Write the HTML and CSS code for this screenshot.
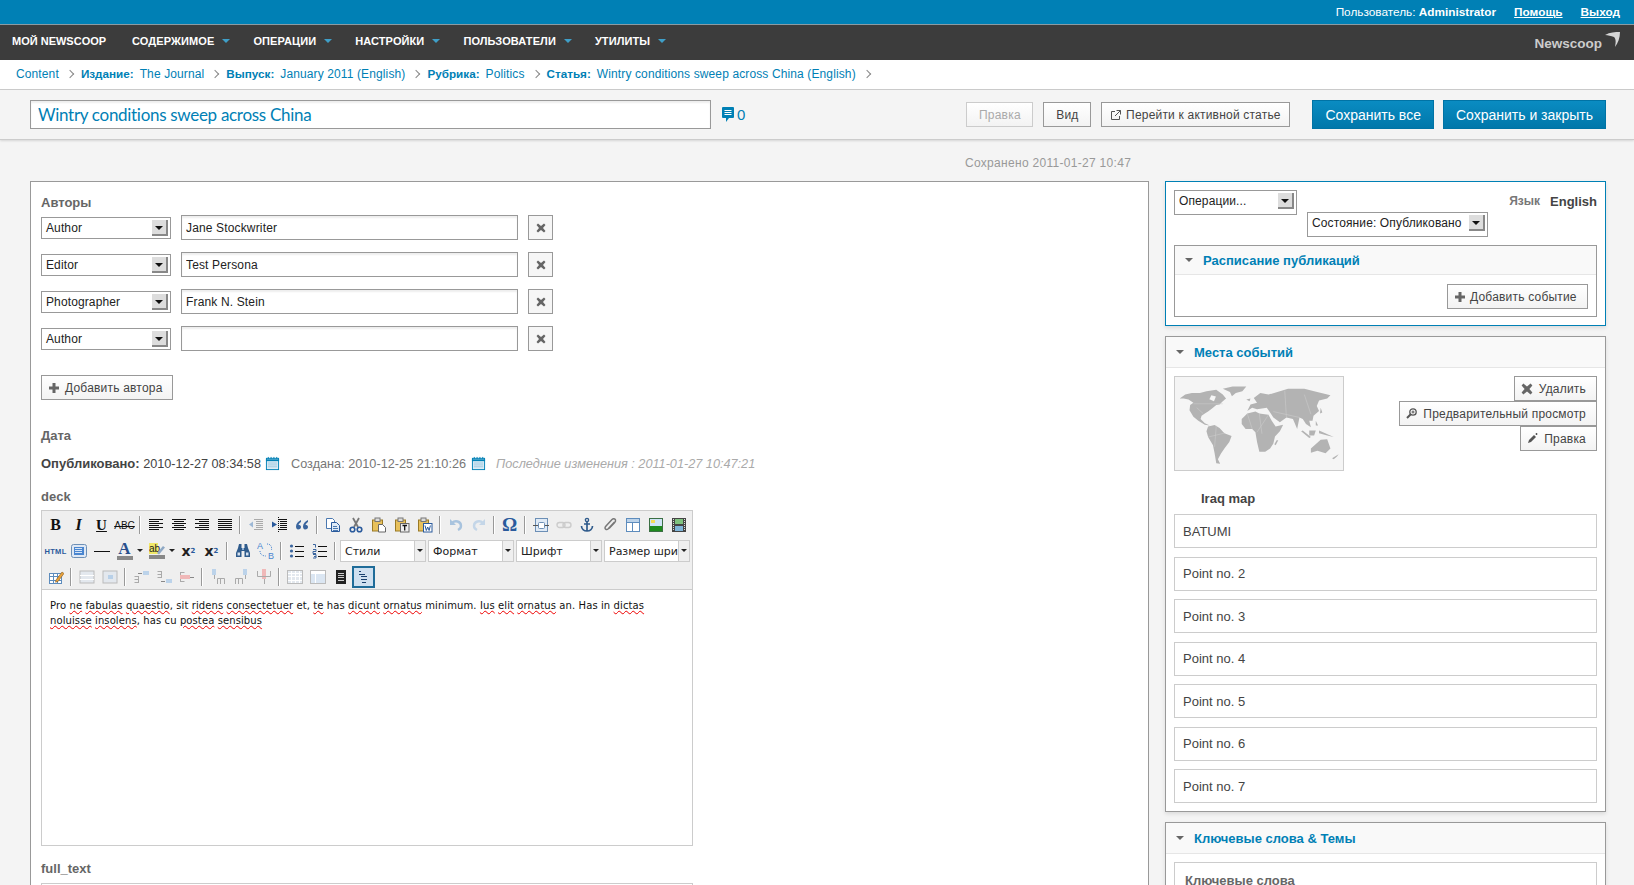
FILE: index.html
```html
<!DOCTYPE html>
<html lang="ru">
<head>
  <meta charset="UTF-8" />
  <title>Newscoop - Wintry conditions sweep across China</title>
  <link rel="stylesheet" href="styles.css">
</head>
<body>

  <!-- toolbar and ui icons, reused below -->
  <svg class="sprites" width="0" height="0">
    <symbol id="al" viewBox="0 0 16 16"><path d="M1 2.500h14M1 4.500h10M1 6.500h14M1 8.500h10M1 10.500h14M1 12.500h10" stroke="#111" fill="none"/></symbol>
    <symbol id="ac" viewBox="0 0 16 16"><path d="M1 2.500h14M3 4.500h10M1 6.500h14M3 8.500h10M1 10.500h14M3 12.500h10" stroke="#111" fill="none"/></symbol>
    <symbol id="ar" viewBox="0 0 16 16"><path d="M1 2.500h14M5 4.500h10M1 6.500h14M5 8.500h10M1 10.500h14M5 12.500h10" stroke="#111" fill="none"/></symbol>
    <symbol id="aj" viewBox="0 0 16 16"><path d="M1 2.500h14M1 4.500h14M1 6.500h14M1 8.500h14M1 10.500h14M1 12.500h14" stroke="#111" fill="none"/></symbol>
    <symbol id="outdent" viewBox="0 0 16 16"><path d="M6 2.500h9M8 4.500h7M8 6.500h7M8 8.500h7M8 10.500h7M6 12.500h9" stroke="#aaa" fill="none"/><path d="M1 7.500l4-3v6z" fill="#9db8d6"/></symbol>
    <symbol id="indent" viewBox="0 0 16 16"><path d="M7 2.500h9M9 4.500h7M9 6.500h7M9 8.500h7M9 10.500h7M7 12.500h9" stroke="#111" fill="none"/><path d="M6 7.500l-5-3v6z" fill="#2a5a9c"/><path d="M7.500 0v16" stroke="#111" stroke-dasharray="1 1"/></symbol>
    <symbol id="quote" viewBox="0 0 16 16"><path d="M7 3C4 4.500 2 6.500 2 9.500c0 2 1 3 2 3 2 0 3-1 3-2.500S6 8 4.500 8C5 6.500 6 5.500 7 5zM14 3c-3 1.500-5 3.500-5 6.500 0 2 1 3 2 3 2 0 3-1 3-2.500S13 8 11.500 8c.5-1.500 1.500-2.500 2.500-3z" fill="#3a659e"/></symbol>
    <symbol id="copy" viewBox="0 0 16 16"><path d="M1.500 1.500h6l2 2v8h-8z" fill="#fff" stroke="#4a78b0"/><path d="M6.500 5.500h5l3 3v6h-8z" fill="#dfeaf6" stroke="#2a5a9c"/><path d="M8 9.500h4M8 11.500h5M8 13.500h5" stroke="#4a78b0"/></symbol>
    <symbol id="cut" viewBox="0 0 16 16"><path d="M5 1l5 9M11 1L6 10" stroke="#777" stroke-width="1.800" fill="none"/><circle cx="4.500" cy="12.500" r="2.300" fill="none" stroke="#2a5a9c" stroke-width="1.600"/><circle cx="11.500" cy="12.500" r="2.300" fill="none" stroke="#2a5a9c" stroke-width="1.600"/></symbol>
    <symbol id="paste" viewBox="0 0 16 16"><rect x="1.500" y="3" width="10" height="11" fill="#e8c15c" stroke="#9a7a26"/><rect x="4" y="1" width="5" height="3.500" fill="#ddd" stroke="#777"/><path d="M7.500 7.500h4l3 3v4.500h-7z" fill="#fff" stroke="#666"/></symbol>
    <symbol id="pastet" viewBox="0 0 16 16"><rect x="1.500" y="3" width="10" height="11" fill="#e8c15c" stroke="#9a7a26"/><rect x="4" y="1" width="5" height="3.500" fill="#ddd" stroke="#777"/><rect x="6.500" y="6.500" width="8.500" height="8.500" fill="#eee" stroke="#666"/><path d="M8.500 8.500h4.500M10.700 8.500v5" stroke="#111" stroke-width="1.300"/></symbol>
    <symbol id="pastew" viewBox="0 0 16 16"><rect x="1.500" y="3" width="10" height="11" fill="#e8c15c" stroke="#9a7a26"/><rect x="4" y="1" width="5" height="3.500" fill="#ddd" stroke="#777"/><rect x="6.500" y="6.500" width="8.500" height="8.500" fill="#fff" stroke="#2a5a9c"/><path d="M8 8.500l1.300 5 1.400-3.500 1.400 3.500 1.300-5" stroke="#2a5a9c" fill="none"/></symbol>
    <symbol id="undo" viewBox="0 0 16 16"><path d="M4 6c3-3 9-2 9 3 0 2-1 3-3 4" fill="none" stroke="#a8c3de" stroke-width="2.400"/><path d="M2 2v6h6z" fill="#a8c3de"/></symbol>
    <symbol id="redo" viewBox="0 0 16 16"><path d="M12 6C9 3 3 4 3 9c0 2 1 3 3 4" fill="none" stroke="#c4d6e8" stroke-width="2.400"/><path d="M14 2v6H8z" fill="#c4d6e8"/></symbol>
    <symbol id="media" viewBox="0 0 16 16"><rect x="2.500" y="1.500" width="12" height="13" fill="#dfeaf6" stroke="#6c8fb6"/><path d="M0 8.500h16" stroke="#555"/><rect x="5.500" y="5.500" width="6" height="6" rx="1" fill="#fff" stroke="#6c8fb6"/></symbol>
    <symbol id="link" viewBox="0 0 16 16"><rect x="1" y="5.500" width="8" height="5" rx="2.500" fill="none" stroke="#ccc" stroke-width="1.400"/><rect x="7" y="5.500" width="8" height="5" rx="2.500" fill="none" stroke="#ccc" stroke-width="1.400"/></symbol>
    <symbol id="anchor" viewBox="0 0 16 16"><circle cx="8" cy="3" r="1.600" fill="none" stroke="#2f5b8c" stroke-width="1.400"/><path d="M8 4.500V14M5 7h6M2.500 9c0 3 2.500 5 5.500 5s5.500-2 5.500-5" fill="none" stroke="#2f5b8c" stroke-width="1.700"/></symbol>
    <symbol id="attach" viewBox="0 0 16 16"><path d="M12.500 5L6 12c-1 1-3 .5-3-1 0-.7.3-1.200 1-2l6-6.500c1-1 3-1 3.500.5.3 1-.3 2-1 2.700L7 11.500" fill="none" stroke="#777" stroke-width="1.500"/></symbol>
    <symbol id="template" viewBox="0 0 16 16"><rect x="1.500" y="1.500" width="13" height="13" fill="#fff" stroke="#5d8cbd"/><rect x="2" y="2" width="12" height="3" fill="#bcd3ea"/><path d="M2 5.500h12M7.500 5v9" stroke="#5d8cbd"/></symbol>
    <symbol id="image" viewBox="0 0 16 16"><rect x="1.500" y="1.500" width="13" height="13" fill="#cfe4f6" stroke="#3b6f44"/><rect x="2" y="9" width="12" height="5" fill="#1e8a1e"/><rect x="3" y="3" width="4" height="3" fill="#f3dc5a"/></symbol>
    <symbol id="video" viewBox="0 0 16 16"><rect x="1" y="1" width="14" height="14" fill="#444"/><path d="M2.500 2v12M13.500 2v12" stroke="#ddd" stroke-dasharray="1 1" fill="none"/><rect x="4" y="2" width="8" height="5" fill="#7ec27e"/><rect x="4" y="9" width="8" height="5" fill="#7fb5d9"/></symbol>
    <symbol id="source" viewBox="0 0 16 16"><rect x=".5" y="1.500" width="15" height="13" rx="2" fill="#dfe8f4" stroke="#6c8fb6"/><rect x="3" y="4" width="10" height="8" fill="#4a86d0"/><path d="M4 5.500h7M4 7.500h7M4 9.500h7" stroke="#d5e4f6"/></symbol>
    <symbol id="find" viewBox="0 0 16 16"><path d="M4 1h2.500v4h3V1H12l1 4 2 5v4H9.500V8h-3v6H1v-4l2-5z" fill="#2f5b8c"/><rect x="2.500" y="9.500" width="2.500" height="3" fill="#d5e2f0"/><rect x="11" y="9.500" width="2.500" height="3" fill="#d5e2f0"/><rect x="7" y="5" width="2" height="2" fill="#8fb0d4"/></symbol>
    <symbol id="ul" viewBox="0 0 16 16"><circle cx="2.500" cy="3" r="1.600" fill="#3a659e"/><circle cx="2.500" cy="8" r="1.600" fill="#3a659e"/><circle cx="2.500" cy="13" r="1.600" fill="#3a659e"/><path d="M6 3.500h9M6 8.500h9M6 13.500h9" stroke="#111"/></symbol>
    <symbol id="ol" viewBox="0 0 16 16"><path d="M1 1.500h2.500v3M1 6.500h3v2H1v2h3M1 11.500h3v3.500H1M2 13.500h2" stroke="#3a659e" fill="none"/><path d="M6 3.500h9M6 8.500h9M6 13.500h9" stroke="#111"/></symbol>
    <symbol id="tedit" viewBox="0 0 16 16"><rect x="1.500" y="4.500" width="12" height="10" fill="#fff" stroke="#5d8cbd"/><path d="M1 7.500h12M1 11.500h12M5.500 4v11M9.500 4v11" stroke="#5d8cbd"/><path d="M8 11l6-8 2 1.500-6 8-2.500.7z" fill="#e8a23c" stroke="#8a5a1c" stroke-width=".6"/></symbol>
    <symbol id="trow" viewBox="0 0 16 16"><rect x="1" y="2" width="14" height="12" fill="#e3e8ee" stroke="#bbb"/><path d="M1 6.500h14M1 10.500h14" stroke="#fff"/></symbol>
    <symbol id="tcell" viewBox="0 0 16 16"><rect x="1" y="2" width="14" height="12" fill="#e3e8ee" stroke="#bbb"/><rect x="6" y="6" width="5" height="4" fill="#b8d0e8"/></symbol>
    <symbol id="rowb" viewBox="0 0 16 16"><path d="M1.500 7.500h4M1.500 10.500h4M1.500 13.500h4M5.500 7v7" stroke="#aaa" fill="none"/><rect x="10" y="2" width="6" height="4" fill="#bcd3ea"/><path d="M5 4.500h4" stroke="#888"/></symbol>
    <symbol id="rowa" viewBox="0 0 16 16"><path d="M1.500 2.500h4M1.500 5.500h4M1.500 8.500h4M5.500 2v7" stroke="#aaa" fill="none"/><rect x="10" y="10" width="6" height="4" fill="#bcd3ea"/><path d="M5 12.500h4" stroke="#888"/></symbol>
    <symbol id="rowd" viewBox="0 0 16 16"><path d="M1.500 3.500h4M1.500 12.500h4M1.500 3v10" stroke="#aaa" fill="none"/><rect x="1" y="6" width="10" height="4" fill="#f0b8b8"/><path d="M11 8.500h4" stroke="#888"/></symbol>
    <symbol id="colb" viewBox="0 0 16 16"><rect x="2" y="0" width="4" height="6" fill="#bcd3ea"/><path d="M4.500 6v4M7.500 15V9.500h7V15M10.500 9v6" stroke="#aaa" fill="none"/></symbol>
    <symbol id="cola" viewBox="0 0 16 16"><rect x="10" y="0" width="4" height="6" fill="#bcd3ea"/><path d="M12.500 6v4M2.500 15V9.500h7V15M5.500 9v6" stroke="#aaa" fill="none"/></symbol>
    <symbol id="cold" viewBox="0 0 16 16"><rect x="6" y="0" width="4" height="10" fill="#f0b8b8"/><path d="M1.500 2v5.500h13V2M8.500 10v5" stroke="#aaa" fill="none"/></symbol>
    <symbol id="tgrid" viewBox="0 0 16 16"><rect x=".5" y="1.500" width="15" height="13" fill="#e3e8ee" stroke="#bbb"/><path d="M1 4.500h14M1 7.500h14M1 11.500h14M4.500 2v12M8.500 2v12M12.500 2v12" stroke="#fff"/></symbol>
    <symbol id="tprop" viewBox="0 0 16 16"><rect x=".5" y="1.500" width="15" height="13" fill="#dbe6f2" stroke="#bbb"/><rect x="1" y="2" width="14" height="3" fill="#fff"/><path d="M5.500 5v9" stroke="#fff"/></symbol>
    <symbol id="print" viewBox="0 0 16 16"><rect x="3" y="1" width="10" height="14" fill="#222"/><path d="M5 4.500h6M5 6.500h6M5 8.500h6M5 11.500h6" stroke="#ccc"/></symbol>
    <symbol id="code" viewBox="0 0 16 16"><path d="M3 2.500h2M3 5.500h6M5 7.500h6M5 10.500h6M6 13.500h4" stroke="#18406e" stroke-width="1.200" fill="none"/></symbol>
    <symbol id="plus" viewBox="0 0 10 10"><path d="M3.500 0h3v3.500H10v3H6.500V10h-3V6.500H0v-3h3.500z" fill="#666"/></symbol>
    <symbol id="cross" viewBox="0 0 10 10"><path d="M2 .5l3 2.500 3-2.500 1.500 1.500L7 5l2.500 3L8 9.500 5 7 2 9.500.5 8 3 5 .5 2z" fill="#666"/></symbol>
    <symbol id="cal" viewBox="0 0 16 16"><rect x="1.500" y="2.500" width="13" height="12" fill="#dcecf6" stroke="#0080b5"/><path d="M1 4.500h14" stroke="#0080b5" stroke-width="2"/><path d="M3.500 1v2M6.500 1v2M9.500 1v2M12.500 1v2" stroke="#0080b5"/><path d="M3 7.500h10M3 9.500h10M3 11.500h10" stroke="#9cc8e0"/></symbol>
  </svg>

  <div class="topbar">
    <span class="user">Пользователь: <b>Administrator</b></span>
    <a href="#">Помощь</a>
    <a href="#">Выход</a>
  </div>

  <nav class="mainnav">
    <a href="#" class="nav-first">Мой Newscoop</a>
    <a href="#">Содержимое<i class="caret"></i></a>
    <a href="#">Операции<i class="caret"></i></a>
    <a href="#">Настройки<i class="caret"></i></a>
    <a href="#">Пользователи<i class="caret"></i></a>
    <a href="#">Утилиты<i class="caret"></i></a>
    <div class="logo">Newscoop<svg width="15" height="15" viewBox="0 0 15 15"><path d="M0 3C5 0 10 0 15 0c0 6-2 11-5 15 1-5 1-8-1-10C6 4 3 3 0 3z" fill="#d5d5d5"/></svg></div>
  </nav>

  <div class="crumbs">
    <a href="#">Content</a><i class="chev"></i>
    <b>Издание:</b><a href="#">The Journal</a><i class="chev"></i>
    <b>Выпуск:</b><a href="#">January 2011 (English)</a><i class="chev"></i>
    <b>Рубрика:</b><a href="#">Politics</a><i class="chev"></i>
    <b>Статья:</b><a href="#">Wintry conditions sweep across China (English)</a><i class="chev"></i>
  </div>

  <div class="titlebar">
    <input class="title-input" type="text" value="Wintry conditions sweep across China" />
    <span class="comments">
      <svg width="12" height="15" viewBox="0 0 12 15"><path d="M1 0h10a1 1 0 0 1 1 1v9a1 1 0 0 1-1 1H7l-3 4v-4H1a1 1 0 0 1-1-1V1a1 1 0 0 1 1-1z" fill="#0080b5"/><path d="M2.500 3.500h7M2.500 5.500h7M2.500 7.500h7" stroke="#fff"/></svg>0
    </span>
    <div class="title-actions">
      <button class="btn btn-disabled btn-edit">Правка</button>
      <button class="btn btn-view">Вид</button>
      <button class="btn btn-goto">
        <svg width="10" height="10" viewBox="0 0 10 10"><path d="M4 1.500H.5v8h8V6M5.500.5h4v4M9.500.5L4 6" fill="none" stroke="#555"/></svg>
        Перейти к активной статье
      </button>
      <button class="btn-save">Сохранить все</button>
      <button class="btn-save">Сохранить и закрыть</button>
    </div>
  </div>

  <div class="saved">Сохранено 2011-01-27 10:47</div>

  <div class="content">
    <main class="panel">
      <h3 class="label">Авторы</h3>
      <div class="author-row">
        <div class="sel sel-author">Author<span class="sel-arrow"></span></div>
        <input class="text-input" type="text" value="Jane Stockwriter" />
        <button class="btn-x"><svg width="10" height="10"><use href="#cross"/></svg></button>
      </div>
      <div class="author-row">
        <div class="sel sel-author">Editor<span class="sel-arrow"></span></div>
        <input class="text-input" type="text" value="Test Persona" />
        <button class="btn-x"><svg width="10" height="10"><use href="#cross"/></svg></button>
      </div>
      <div class="author-row">
        <div class="sel sel-author">Photographer<span class="sel-arrow"></span></div>
        <input class="text-input" type="text" value="Frank N. Stein" />
        <button class="btn-x"><svg width="10" height="10"><use href="#cross"/></svg></button>
      </div>
      <div class="author-row">
        <div class="sel sel-author">Author<span class="sel-arrow"></span></div>
        <input class="text-input" type="text" value="" />
        <button class="btn-x"><svg width="10" height="10"><use href="#cross"/></svg></button>
      </div>
      <button class="btn btn-add-author"><svg width="10" height="10"><use href="#plus"/></svg>Добавить автора</button>

      <h3 class="label label-date">Дата</h3>
      <div class="dates">
        <b>Опубликовано:</b> 2010-12-27 08:34:58 <svg class="cal" width="15" height="15"><use href="#cal"/></svg>
        <span class="created">Создана: 2010-12-25 21:10:26</span> <svg class="cal" width="15" height="15"><use href="#cal"/></svg>
        <em>Последние изменения : 2011-01-27 10:47:21</em>
      </div>

      <h3 class="label label-deck">deck</h3>
      <div class="editor">
        <div class="toolbar">
          <div class="tb-row">
            <span class="tb tb-b">B</span><span class="tb tb-i">I</span><span class="tb tb-u">U</span><span class="tb tb-s">ABC</span><i class="tb-sep"></i>
            <span class="tb"><svg width="16" height="16"><use href="#al"/></svg></span><span class="tb"><svg width="16" height="16"><use href="#ac"/></svg></span><span class="tb"><svg width="16" height="16"><use href="#ar"/></svg></span><span class="tb"><svg width="16" height="16"><use href="#aj"/></svg></span><i class="tb-sep"></i>
            <span class="tb"><svg width="16" height="16"><use href="#outdent"/></svg></span><span class="tb"><svg width="16" height="16"><use href="#indent"/></svg></span><span class="tb"><svg width="16" height="16"><use href="#quote"/></svg></span><i class="tb-sep"></i>
            <span class="tb"><svg width="16" height="16"><use href="#copy"/></svg></span><span class="tb"><svg width="16" height="16"><use href="#cut"/></svg></span><span class="tb"><svg width="16" height="16"><use href="#paste"/></svg></span><span class="tb"><svg width="16" height="16"><use href="#pastet"/></svg></span><span class="tb"><svg width="16" height="16"><use href="#pastew"/></svg></span><i class="tb-sep"></i>
            <span class="tb"><svg width="16" height="16"><use href="#undo"/></svg></span><span class="tb"><svg width="16" height="16"><use href="#redo"/></svg></span><i class="tb-sep"></i>
            <span class="tb tb-omega">Ω</span><i class="tb-sep"></i>
            <span class="tb"><svg width="16" height="16"><use href="#media"/></svg></span><span class="tb"><svg width="16" height="16"><use href="#link"/></svg></span><span class="tb"><svg width="16" height="16"><use href="#anchor"/></svg></span><span class="tb"><svg width="16" height="16"><use href="#attach"/></svg></span><span class="tb"><svg width="16" height="16"><use href="#template"/></svg></span><span class="tb"><svg width="16" height="16"><use href="#image"/></svg></span><span class="tb"><svg width="16" height="16"><use href="#video"/></svg></span>
          </div>
          <div class="tb-row">
            <span class="tb tb-html">HTML</span><span class="tb"><svg width="16" height="16"><use href="#source"/></svg></span><span class="tb tb-hr"><i></i></span>
            <span class="tb tb-color">A<i></i></span><i class="tb-drop"></i>
            <span class="tb tb-hl">
              <svg width="16" height="16" viewBox="0 0 16 16"><rect x="0" y="0" width="9" height="11" fill="#f0e868"/><text x="0" y="9" class="hl-text">ab</text><path d="M8 10l6-7 2 1.500-6 7z" fill="#8fa8c4"/><rect x="0" y="12" width="16" height="4" fill="#888"/></svg>
            </span><i class="tb-drop"></i>
            <span class="tb tb-sub">x<sub>2</sub></span><span class="tb tb-sub">x<sup>2</sup></span><i class="tb-sep"></i>
            <span class="tb"><svg width="16" height="16"><use href="#find"/></svg></span>
            <span class="tb">
              <svg width="18" height="18" viewBox="0 0 18 18"><text x="0" y="7" class="repl-text">A</text><text x="11" y="17" class="repl-text">B</text><path d="M3 9c0 3 2 5 6 5M10 2c4 0 5 3 4.500 6" fill="none" stroke="#4a86d0" stroke-dasharray="1 1"/></svg>
            </span><i class="tb-sep"></i>
            <span class="tb"><svg width="16" height="16"><use href="#ul"/></svg></span><span class="tb"><svg width="16" height="16"><use href="#ol"/></svg></span><i class="tb-sep"></i>
            <div class="tb-selects">
              <div class="tb-sel">Стили<span></span></div>
              <div class="tb-sel">Формат<span></span></div>
              <div class="tb-sel">Шрифт<span></span></div>
              <div class="tb-sel">Размер шри<span></span></div>
            </div>
          </div>
          <div class="tb-row">
            <span class="tb"><svg width="16" height="16"><use href="#tedit"/></svg></span><i class="tb-sep"></i>
            <span class="tb"><svg width="16" height="16"><use href="#trow"/></svg></span><span class="tb"><svg width="16" height="16"><use href="#tcell"/></svg></span><i class="tb-sep"></i>
            <span class="tb"><svg width="16" height="16"><use href="#rowb"/></svg></span><span class="tb"><svg width="16" height="16"><use href="#rowa"/></svg></span><span class="tb"><svg width="16" height="16"><use href="#rowd"/></svg></span><i class="tb-sep"></i>
            <span class="tb"><svg width="16" height="16"><use href="#colb"/></svg></span><span class="tb"><svg width="16" height="16"><use href="#cola"/></svg></span><span class="tb"><svg width="16" height="16"><use href="#cold"/></svg></span><i class="tb-sep"></i>
            <span class="tb"><svg width="16" height="16"><use href="#tgrid"/></svg></span><span class="tb"><svg width="16" height="16"><use href="#tprop"/></svg></span><span class="tb"><svg width="16" height="16"><use href="#print"/></svg></span><span class="tb tb-active"><svg width="16" height="16"><use href="#code"/></svg></span>
          </div>
        </div>
        <div class="editor-body">
          Pro <u>ne</u> <u>fabulas</u> <u>quaestio</u>, sit <u>ridens</u> <u>consectetuer</u> et, <u>te</u> has <u>dicunt</u> <u>ornatus</u> minimum. <u>Ius</u> <u>elit</u> <u>ornatus</u> an. Has in <u>dictas</u><br>
          <u>noluisse</u> <u>insolens</u>, has cu <u>postea</u> <u>sensibus</u>
        </div>
      </div>

      <h3 class="label label-full">full_text</h3>
      <div class="editor editor-next"></div>
    </main>

    <aside class="side">
      <section class="box box-active">
        <div class="status-row">
          <div class="sel sel-ops">Операции...<span class="sel-arrow"></span></div>
          <div class="status-right">
            <div class="lang"><span>Язык</span><b>English</b></div>
            <div class="sel sel-state">Состояние: Опубликовано<span class="sel-arrow"></span></div>
          </div>
        </div>
        <div class="box-inner">
          <h4 class="box-head head-inner"><i class="tri"></i>Расписание публикаций</h4>
          <div class="schedule">
            <button class="btn btn-add-event"><svg width="10" height="10"><use href="#plus"/></svg>Добавить событие</button>
          </div>
        </div>
      </section>

      <section class="box">
        <h4 class="box-head"><i class="tri"></i>Места событий</h4>
        <div class="box-body">
          <div class="map-row">
            <svg class="map" width="170" height="95" viewBox="6 6 510 285">
              <g fill="#b3b3b3">
                <path d="M18 72L35 60 55 55 80 55 100 50 130 45 150 60 160 72 150 80 140 90 130 92 120 100 105 112 95 118 85 125 82 135 95 148 110 155 95 152 75 140 60 128 48 108 50 92 60 85 45 75 30 72z"/>
                <path d="M150 42L180 35 222 35 210 50 190 55 178 65 172 52z"/>
                <path d="M105 158L125 153 140 162 155 178 177 187 170 205 155 225 145 240 135 258 142 272 130 270 125 240 120 215 105 190 100 172z"/>
                <path d="M208 135L225 118 250 112 262 118 290 122 300 140 312 158 335 152 325 172 310 188 305 210 295 225 280 235 262 235 255 205 250 175 240 165 220 165 208 150z"/>
                <path d="M315 200L320 200 312 215 308 212z"/>
                <path d="M225 110L235 90 255 85 245 70 265 55 290 60 330 48 350 42 400 42 430 50 480 62 470 72 445 78 438 95 445 110 428 125 425 140 415 140 420 160 405 150 395 135 385 130 378 165 365 135 345 130 325 145 305 130 295 115 285 100 255 105 240 100z"/>
                <path d="M395 170L420 190 415 193 390 172zM415 170L435 170 430 185 415 185zM445 170L490 190 470 185 445 178zM450 100L455 115 448 118zM435 140L442 155 435 155z"/>
                <path d="M420 225L450 198 470 197 480 225 465 240 440 232 420 238z"/>
                <path d="M485 255L505 243 500 250 490 258zM222 75L235 72 232 80z"/>
              </g>
              <path d="M115 62l14 4-6 14-14-6z" fill="#f5f5f5"/>
              <path d="M60 88L150 88M90 118L70 100M225 118L240 165M262 118L270 180M290 122L255 175M305 112L385 130M340 48L345 130M400 60L420 120M130 155L125 220M155 178L105 190" stroke="#cfcfcf" stroke-width="1.500" fill="none"/>
            </svg>
            <div class="map-actions">
              <button class="btn"><svg width="12" height="12"><use href="#cross"/></svg>Удалить</button>
              <button class="btn"><svg width="11" height="11" viewBox="0 0 11 11"><circle cx="7" cy="4" r="3.200" fill="none" stroke="#555" stroke-width="1.300"/><path d="M4.500 6.500L1 10" stroke="#555" stroke-width="2"/><path d="M5.500 4h3M7 2.500v3" stroke="#555"/></svg>Предварительный просмотр</button>
              <button class="btn"><svg width="11" height="11" viewBox="0 0 11 11"><path d="M1 10l1-3 5-5 2 2-5 5z" fill="#555"/><path d="M9.500 0v2M8.500 1h2" stroke="#555"/></svg>Правка</button>
            </div>
          </div>
          <div class="map-name">Iraq map</div>
          <ul class="points">
            <li>BATUMI</li>
            <li>Point no. 2</li>
            <li>Point no. 3</li>
            <li>Point no. 4</li>
            <li>Point no. 5</li>
            <li>Point no. 6</li>
            <li>Point no. 7</li>
          </ul>
        </div>
      </section>

      <section class="box">
        <h4 class="box-head"><i class="tri"></i>Ключевые слова &amp; Темы</h4>
        <div class="box-body">
          <div class="keywords">Ключевые слова</div>
        </div>
      </section>
    </aside>
  </div>

</body>
</html>
```

FILE: styles.css
```css
:root {
  --blue: #0080b5;
  --border: #999;
  --text: #444;
}
* {
  margin: 0;
  padding: 0;
  box-sizing: border-box;
}
html, body {
  height: 885px;
  overflow: hidden;
}
body {
  font-family: 'Liberation Sans', Arial, sans-serif;
  font-size: 13px;
  background: #f4f4f4;
  color: var(--text);
}
a {
  color: inherit;
}
.sprites {
  position: absolute;
}

/* top */
.topbar {
  height: 25px;
  background: var(--blue);
  border-bottom: 1px solid #8a9ba3;
  color: #fff;
  display: flex;
  justify-content: flex-end;
  align-items: center;
  gap: 18px;
  padding-right: 14px;
  font-size: 11.8px;
}
.topbar a {
  font-weight: bold;
}
.mainnav {
  height: 35px;
  background: #3c3c3c;
  display: flex;
  align-items: center;
  padding: 0 0 4px 12px;
  color: #fff;
}
.mainnav > a {
  text-decoration: none;
  text-transform: uppercase;
  font-size: 11px;
  font-weight: bold;
  letter-spacing: .1px;
  margin-right: 23px;
  display: flex;
  align-items: center;
}
.mainnav > .nav-first {
  letter-spacing: 0;
  margin-right: 26px;
}
.caret {
  width: 0;
  height: 0;
  border: 4px solid transparent;
  border-top: 4px solid #3f9fc8;
  border-bottom: 0;
  margin-left: 8px;
}
.logo {
  margin-left: auto;
  margin-right: 14px;
  font-size: 13.5px;
  font-weight: bold;
  color: #ccc;
  display: flex;
  align-items: flex-start;
  margin-top: 6px;
}
.logo svg {
  margin-top: -4px;
  margin-left: 3px;
}
.crumbs {
  height: 30px;
  background: #fff;
  border-bottom: 1px solid #ccc;
  display: flex;
  align-items: center;
  padding: 0 0 2px 16px;
  font-size: 12px;
  color: var(--blue);
}
.crumbs a {
  text-decoration: none;
  letter-spacing: .12px;
}
.crumbs b {
  font-size: 11.7px;
  margin-right: 6px;
}
.chev {
  width: 6px;
  height: 6px;
  border-top: 1px solid #888;
  border-right: 1px solid #888;
  transform: rotate(45deg);
  margin: 0 8px;
}
.titlebar {
  height: 50px;
  display: flex;
  align-items: center;
  padding: 0 28px 0 30px;
  border-bottom: 1px solid #ccc;
  box-shadow: 0 1px 2px rgba(0,0,0,.12);
}
.title-input {
  width: 681px;
  height: 29px;
  border: 1px solid var(--border);
  box-shadow: inset 0 2px 2px #eee;
  padding-left: 7px;
  font-family: Lato, 'Noto Sans', sans-serif;
  font-size: 17px;
  letter-spacing: -.3px;
  color: var(--blue);
  outline: none;
}
.comments {
  display: flex;
  align-items: center;
  gap: 3px;
  margin-left: 11px;
  font-size: 15px;
  color: var(--blue);
}
.title-actions {
  margin-left: auto;
  display: flex;
  align-items: center;
}
.btn {
  height: 25px;
  font-family: inherit;
  font-size: 12px;
  letter-spacing: .2px;
  color: var(--text);
  background: linear-gradient(#fff, #f3f3f3);
  border: 1px solid var(--border);
  display: inline-flex;
  align-items: center;
  justify-content: center;
  white-space: nowrap;
}
.btn-edit { width: 67px; }
.btn-view { width: 48px; margin-left: 10px; }
.btn-goto { width: 189px; margin-left: 10px; gap: 5px; }
.btn-disabled {
  color: #aaa;
  border-color: #ccc;
}
.btn-save {
  height: 29px;
  padding: 0 12px;
  font-family: inherit;
  font-size: 14px;
  color: #fff;
  background: linear-gradient(#0a8cc2, #0077aa);
  border: 1px solid #0073a5;
  margin-left: 9px;
}
.btn-goto + .btn-save {
  margin-left: 22px;
}
.saved {
  height: 41px;
  display: flex;
  align-items: center;
  padding: 4px 0 0 965px;
  font-size: 12px;
  letter-spacing: .3px;
  color: #999;
}

/* layout */
.content {
  display: grid;
  grid-template-columns: 1119px 441px;
  gap: 16px;
  padding-left: 30px;
  align-items: start;
}
.panel {
  background: #fff;
  border: 1px solid var(--border);
  padding: 13px 10px 20px;
  height: 760px;
}
.label {
  font-size: 13px;
  line-height: 16px;
  color: #666;
}
.author-row {
  display: flex;
  align-items: center;
  height: 25px;
  margin-top: 12px;
}
.label + .author-row {
  margin-top: 4px;
}

/* fake selects */
.sel {
  height: 22px;
  background: #fff;
  border: 1px solid var(--border);
  font-size: 12px;
  letter-spacing: .12px;
  color: #222;
  padding-left: 4px;
  display: flex;
  align-items: center;
  justify-content: space-between;
}
.sel-arrow {
  width: 16px;
  height: 16px;
  margin-right: 2px;
  background: #ddd;
  border-right: 2px solid #888;
  border-bottom: 2px solid #888;
  position: relative;
}
.sel-arrow::after {
  content: "";
  position: absolute;
  left: 3px;
  top: 6px;
  border: 4px solid transparent;
  border-top: 4px solid #111;
  border-bottom: 0;
}
.sel-author {
  width: 130px;
  margin-right: 10px;
}
.text-input {
  width: 337px;
  height: 25px;
  border: 1px solid var(--border);
  box-shadow: inset 0 2px 2px #eee;
  padding-left: 4px;
  font-family: inherit;
  font-size: 12px;
  letter-spacing: .15px;
  color: #222;
  outline: none;
}
.btn-x {
  width: 25px;
  height: 25px;
  margin-left: 10px;
  background: #f6f6f6;
  border: 1px solid var(--border);
  display: flex;
  align-items: center;
  justify-content: center;
}
.btn-add-author {
  width: 132px;
  margin-top: 24px;
  gap: 6px;
  justify-content: flex-start;
  padding-left: 7px;
}
.label-date { margin-top: 28px; }
.dates {
  margin-top: 12px;
  line-height: 16px;
  font-size: 12.7px;
  color: #444;
  white-space: nowrap;
}
.dates b {
  font-size: 13px;
}
.cal {
  vertical-align: -3px;
  margin-left: 1px;
}
.created {
  color: #777;
  margin-left: 7px;
}
.dates em {
  color: #aaa;
  margin-left: 7px;
}
.label-deck { margin-top: 17px; }
.label-full { margin-top: 15px; }

/* editor */
.editor {
  width: 652px;
  height: 336px;
  margin-top: 5px;
  border: 1px solid #ccc;
  background: #fff;
}
.editor-next { margin-top: 6px; }
.toolbar {
  height: 79px;
  padding: 1px 0 0 2px;
  background: #efefef;
  border-bottom: 1px solid #ccc;
}
.tb-row {
  display: flex;
  align-items: center;
  height: 26px;
}
.tb {
  width: 23px;
  height: 22px;
  flex: none;
  display: flex;
  align-items: center;
  justify-content: center;
  font-family: 'Liberation Serif', serif;
  color: #111;
}
.tb-sep {
  width: 2px;
  height: 18px;
  margin: 0 3px;
  flex: none;
  background: linear-gradient(90deg, #999 50%, #fff 50%);
}
.tb-b { font-size: 16px; font-weight: bold; }
.tb-i { font-size: 16px; font-weight: bold; font-style: italic; }
.tb-u { font-size: 15px; font-weight: bold; text-decoration: underline; }
.tb-s { font-size: 10px; text-decoration: line-through; font-family: 'Liberation Sans', sans-serif; }
.tb-omega { font-size: 19px; font-weight: bold; color: #2a5a9c; }
.tb-html {
  font: bold 7.5px 'Liberation Sans', sans-serif;
  letter-spacing: .3px;
  color: #2a5a9c;
}
.tb-hr i {
  width: 16px;
  height: 1px;
  background: #111;
}
.tb-color {
  flex-direction: column;
  font: bold 17px/14px 'Liberation Serif', serif;
  color: #2a4f8c;
}
.tb-color i {
  width: 16px;
  height: 4px;
  background: #888;
}
.hl-text {
  font: 10px 'Liberation Sans', sans-serif;
  fill: #222;
}
.repl-text {
  font: 9px 'Liberation Sans', sans-serif;
  fill: #4a86d0;
}
.tb-drop {
  width: 9px;
  height: 22px;
  flex: none;
  position: relative;
}
.tb-drop::after {
  content: "";
  position: absolute;
  left: 1px;
  top: 9px;
  border: 3px solid transparent;
  border-top: 3px solid #222;
  border-bottom: 0;
}
.tb-sub {
  font: bold 14px 'DejaVu Sans', sans-serif;
  color: #222;
}
.tb-sub sub, .tb-sub sup {
  font-size: 7px;
  color: #2a5a9c;
}
.tb-selects {
  display: flex;
  gap: 2px;
  margin-left: 1px;
}
.tb-sel {
  width: 86px;
  height: 22px;
  border: 1px solid #ccc;
  background: #fff;
  font: 11px 'DejaVu Sans', sans-serif;
  color: #222;
  padding-left: 4px;
  display: flex;
  align-items: center;
  justify-content: space-between;
  overflow: hidden;
}
.tb-sel span {
  width: 11px;
  height: 20px;
  flex: none;
  background: #efefef;
  border-left: 1px solid #ccc;
  position: relative;
}
.tb-sel span::after {
  content: "";
  position: absolute;
  left: 2px;
  top: 8px;
  border: 3px solid transparent;
  border-top: 3px solid #222;
  border-bottom: 0;
}
.tb-active {
  background: #cfe0f0;
  border: 2px solid #1f6c99;
}
.editor-body {
  padding: 9px 8px;
  font: 10px/14.5px 'DejaVu Sans', sans-serif;
  letter-spacing: .1px;
  color: #111;
}
.editor-body u {
  text-decoration: underline wavy #e00;
  text-decoration-thickness: 1px;
}

/* right column */
.side {
  display: flex;
  flex-direction: column;
  gap: 10px;
}
.box {
  background: #fff;
  border: 1px solid var(--border);
  box-shadow: 0 2px 4px rgba(0,0,0,.1);
}
.box-active {
  border-color: var(--blue);
  padding: 8px;
}
.status-row {
  display: flex;
}
.sel-ops {
  width: 123px;
  height: 25px;
  padding-bottom: 3px;
}
.status-right {
  flex: 1;
  margin-left: 10px;
}
.lang {
  height: 22px;
  display: flex;
  justify-content: flex-end;
  align-items: center;
  gap: 10px;
  font-size: 12px;
  font-weight: bold;
  color: #777;
}
.lang b {
  font-size: 13px;
  color: #444;
}
.sel-state {
  width: 181px;
  height: 25px;
  padding-bottom: 3px;
}
.box-inner {
  margin-top: 8px;
  border: 1px solid var(--border);
}
.box-head {
  height: 31px;
  display: flex;
  align-items: center;
  padding-left: 10px;
  font-size: 13px;
  color: var(--blue);
  background: #f9f9f9;
  border-bottom: 1px solid #e6e6e6;
}
.head-inner {
  height: 29px;
}
.tri {
  width: 0;
  height: 0;
  border: 4px solid transparent;
  border-top: 4px solid #666;
  border-bottom: 0;
  margin-right: 10px;
}
.schedule {
  display: flex;
  justify-content: flex-end;
  padding: 9px 8px 7px;
}
.btn-add-event {
  width: 141px;
  gap: 5px;
  justify-content: flex-start;
  padding-left: 7px;
}
.box-body {
  padding: 8px;
}
.map-row {
  display: flex;
  justify-content: space-between;
}
.map {
  background: #f5f5f5;
  border: 1px solid #ccc;
}
.map-actions {
  display: flex;
  flex-direction: column;
  align-items: flex-end;
}
.map-actions .btn {
  padding: 0 10px 0 6px;
  gap: 6px;
}
.map-name {
  margin: 20px 0 7px;
  padding-left: 27px;
  font-weight: bold;
  line-height: 16px;
}
.points {
  list-style: none;
  display: flex;
  flex-direction: column;
  gap: 8.5px;
}
.points li {
  height: 34px;
  border: 1px solid #ccc;
  padding-left: 8px;
  display: flex;
  align-items: center;
  font-size: 13px;
}
.keywords {
  height: 60px;
  border: 1px solid #ccc;
  padding: 10px;
  font-weight: bold;
  color: #666;
}
```
